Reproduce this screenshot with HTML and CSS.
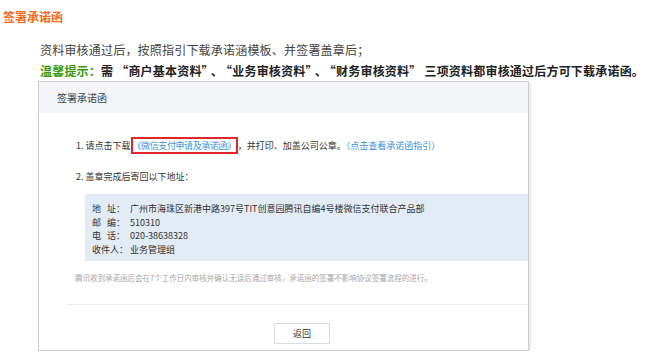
FILE: index.html
```html
<!DOCTYPE html>
<html lang="zh-CN">
<head>
  <title>签署承诺函</title>
  <meta charset="utf-8">
  <link rel="stylesheet" href="styles.css">
</head>
<body>
  <h3 class="title">签署承诺函</h3>
  <div class="intro">
    <p class="lead">资料审核通过后，按照指引下载承诺涵模板、并签署盖章后；</p>
    <p class="tip"><span class="tip-label">温馨提示：</span>需<span class="term">“商户基本资料”</span>、<span class="term">“业务审核资料”</span>、<span class="term">“财务审核资料”</span>三项资料都审核通过后方可下载承诺函。</p>
  </div>

  <div class="dialog">
    <div class="dialog-head">签署承诺函</div>
    <div class="dialog-body">
      <p class="step">1. 请点击下载<a class="doc-link" href="#">《微信支付申请及承诺函》</a>，并打印、加盖公司公章。<a class="guide" href="#">（点击查看承诺函指引）</a></p>
      <p class="step step2">2. 盖章完成后寄回以下地址：</p>
      <div class="address">
        <div><span class="label">地&nbsp;&nbsp;&nbsp;址：</span>广州市海珠区新港中路397号TIT创意园腾讯自编4号楼微信支付联合产品部</div>
        <div><span class="label">邮&nbsp;&nbsp;&nbsp;编：</span>510310</div>
        <div><span class="label">电&nbsp;&nbsp;&nbsp;话：</span>020-38638328</div>
        <div><span class="label">收件人：</span>业务管理组</div>
      </div>
      <p class="note">腾讯收到承诺函后会在7个工作日内审核并确认无误后通过审核，承诺函的签署不影响协议签署流程的进行。</p>
      <div class="dialog-foot">
        <button class="back-btn">返回</button>
      </div>
    </div>
  </div>
</body>
</html>
```

FILE: styles.css
```css
body {
  margin: 0;
  padding: 0;
  background-color: #fff;
  color: #333;
  font-family: "Noto Sans CJK SC", "Noto Sans", sans-serif;
}
p {
  margin: 0;
}
.title {
  margin: 0;
  padding: 7px 3px 0;
  height: 22px;
  line-height: 20px;
  font-size: 12px;
  font-weight: bold;
  color: #f26a1d;
}
.intro {
  padding: 10px 0 0 40px;
  font-size: 12px;
  line-height: 21px;
  color: #444;
}
.intro p {
  height: 21px;
}
.lead {
  letter-spacing: 0.2px;
}
.tip {
  font-weight: bold;
  color: #222;
  white-space: nowrap;
  letter-spacing: 0.2px;
}
.tip-label {
  color: #3a9a0a;
}
.term {
  margin: 0 3px;
}
.dialog {
  margin: 0 0 0 38px;
  width: 489px;
  border: 1px solid #cfcfcf;
  box-shadow: 2px 2px 0 #ececec;
  background: #fff;
}
.dialog-head {
  height: 31px;
  line-height: 31px;
  padding-left: 18px;
  background: #f3f5f8;
  font-size: 10px;
  color: #444;
}
.dialog-body {
  padding: 24px 0 6px;
  font-size: 9px;
  color: #333;
}
.step {
  padding-left: 37px;
  line-height: 18px;
  white-space: nowrap;
}
.step2 {
  margin-top: 13px;
}
.doc-link {
  display: inline-block;
  color: #3d8fe0;
  text-decoration: none;
  border: 2px solid #e0262b;
  line-height: 13px;
  padding: 0;
  letter-spacing: -0.4px;
}
.guide {
  color: #3d8fe0;
  text-decoration: none;
}
.address {
  margin: 8px 0 0 46px;
  padding: 8px 0 5px 7px;
  background: #e3ebf5;
  line-height: 13.5px;
  color: #333;
}
.label {
  display: inline-block;
  width: 38px;
}
.note {
  margin-top: 10px;
  padding-left: 36px;
  line-height: 14px;
  font-size: 7.5px;
  color: #a8a8a8;
  white-space: nowrap;
}
.dialog-foot {
  margin: 19px 0 0 28px;
  border-top: 1px solid #ececec;
  padding: 18px 0 0 207px;
}
.back-btn {
  width: 56px;
  height: 21px;
  padding: 0;
  border: 1px solid #dcdcdc;
  background: #fff;
  font-family: inherit;
  font-size: 9px;
  color: #333;
}
```
